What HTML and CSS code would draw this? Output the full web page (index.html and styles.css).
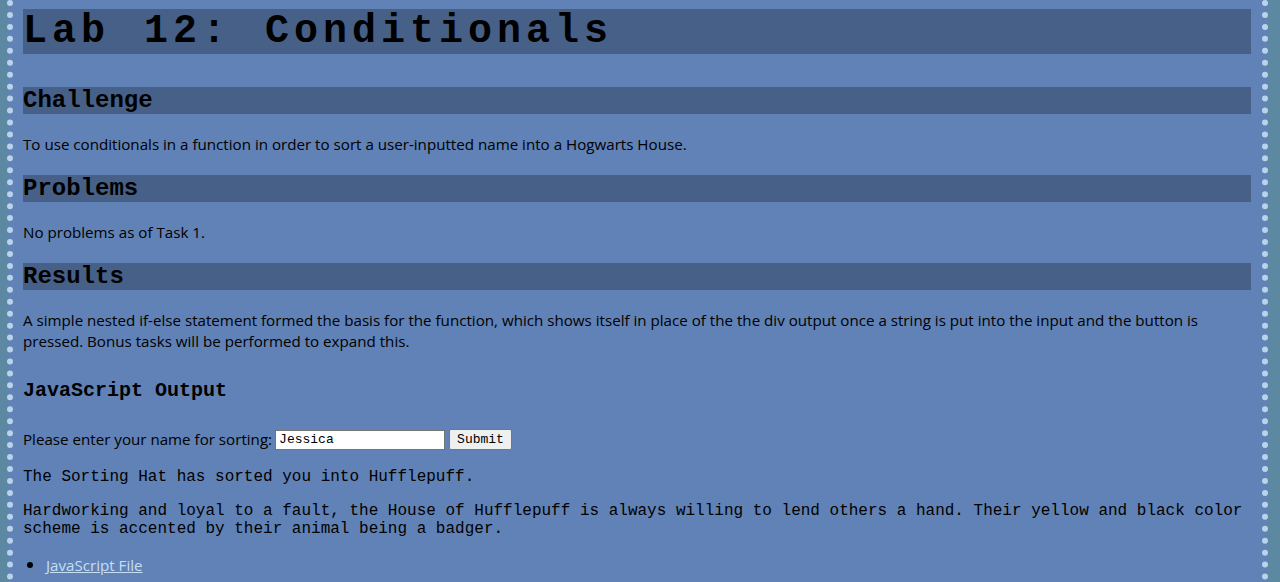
FILE: index.html
```html
<!DOCTYPE html>
<html lang="en">
<head>
<meta charset="utf-8">
<title>Lab 12: Conditionals</title>
<link rel="stylesheet" href="styles.css">
</head>
<body>
<h1 class="title">Lab 12: Conditionals</h1>
<h2 class="section">Challenge</h2>
<p class="text">To use conditionals in a function in order to sort a user-inputted name into a Hogwarts House.</p>
<h2 class="section">Problems</h2>
<p class="text">No problems as of Task 1.</p>
<h2 class="section">Results</h2>
<p class="text">A simple nested if-else statement formed the basis for the function, which shows itself in place of the the div output once a string is put into the input and the button is pressed. Bonus tasks will be performed to expand this.</p>
<h3 class="sub">JavaScript Output</h3>
<form class="sort-form">
<label class="sort-label" for="name">Please enter your name for sorting:</label>
<input class="sort-input" id="name" type="text" value="Jessica">
<button class="sort-button" type="button">Submit</button>
</form>
<div class="output">
<p class="mono">The Sorting Hat has sorted you into Hufflepuff.</p>
<p class="mono">Hardworking and loyal to a fault, the House of Hufflepuff is always willing to lend others a hand. Their yellow and black color scheme is accented by their animal being a badger.</p>
</div>
<ul class="links">
<li class="link-item"><a class="link" href="#">JavaScript File</a></li>
</ul>
</body>
</html>
```
FILE: styles.css
```css
html {
  background: #5d88a2;
}
body {
  margin: 0 12px 0 7px;
  padding: 9px 11px 0 10px;
  min-height: 100vh;
  box-sizing: border-box;
  background: #6082b6;
  border-left: 6px dotted #b8d3ea;
  border-right: 6px dotted #b8d3ea;
  color: #000;
  font-family: "Open Sans", "Noto Sans", sans-serif;
  font-size: 15.15px;
}
.title {
  margin: 0;
  background: #466087;
  font-family: "Liberation Mono", "Courier New", monospace;
  font-size: 40px;
  letter-spacing: 5px;
  word-spacing: 5px;
  line-height: 45px;
  font-weight: bold;
}
.section {
  margin: 20px 0;
  background: #466087;
  font-family: "Liberation Mono", "Courier New", monospace;
  font-size: 24px;
  line-height: 27px;
  font-weight: bold;
}
.title + .section {
  margin-top: 33px;
}
.text {
  margin: 20px 0;
  line-height: 21px;
}
.sub {
  margin: 28px 0 27px;
  font-family: "Liberation Mono", "Courier New", monospace;
  font-size: 20px;
  line-height: 22px;
  font-weight: bold;
}
.sort-form {
  display: flex;
  align-items: center;
  gap: 3px;
  margin: 0;
  height: 21px;
  line-height: 21px;
}
.sort-input {
  width: 170px;
  height: 20px;
  box-sizing: border-box;
  margin: 0;
  padding: 1px 3px;
  border: 1px solid #767676;
  background: #fff;
  font-family: "Liberation Mono", "Courier New", monospace;
  font-size: 13px;
}
.sort-button {
  height: 21px;
  box-sizing: border-box;
  margin: 0 0 0 1px;
  padding: 0 7px;
  border: 1px solid #767676;
  border-radius: 2px;
  background: #efefef;
  font-family: "Liberation Mono", "Courier New", monospace;
  font-size: 13px;
  color: #000;
}
.output {
  margin-top: 18px;
}
.mono {
  margin: 16px 0;
  font-family: "Liberation Mono", "Courier New", monospace;
  font-size: 16px;
  line-height: 18px;
}
.output .mono:first-child {
  margin-top: 0;
}
.links {
  margin: 16px 0;
  padding-left: 23px;
  line-height: 21px;
}
.link-item::marker {
  font-size: 17px;
}
.link {
  color: #c6def3;
}
```
